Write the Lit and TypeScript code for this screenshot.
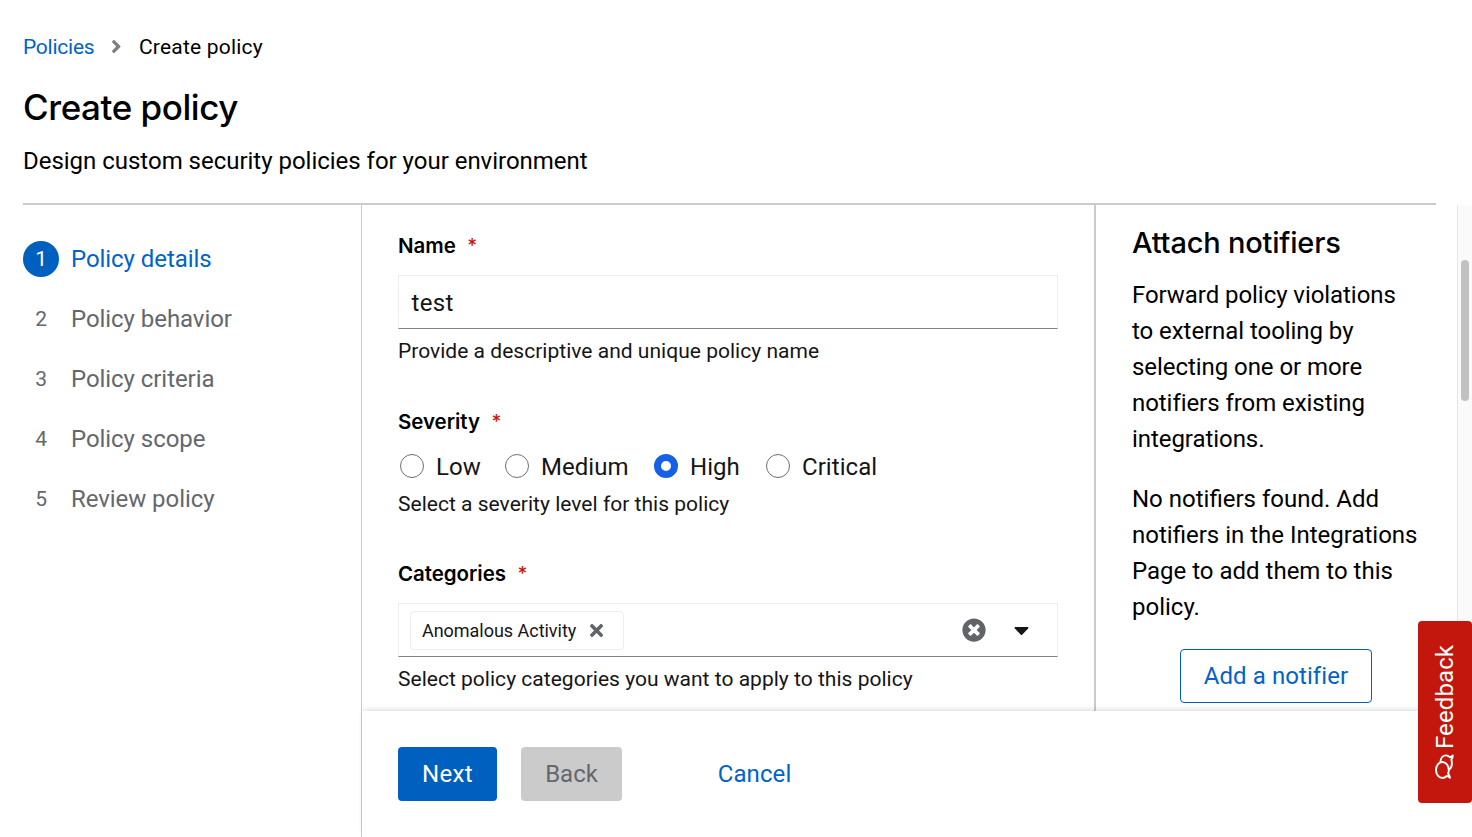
import { LitElement, html, css, svg } from "lit";
import { customElement, state } from "lit/decorators.js";
import { classMap } from "lit/directives/class-map.js";

const ANGLE_RIGHT =
  "M224.3 273l-136 136c-9.4 9.4-24.6 9.4-33.9 0l-22.6-22.6c-9.4-9.4-9.4-24.6 0-33.9l96.4-96.4-96.4-96.4c-9.4-9.4-9.4-24.6 0-33.9L54.3 103c9.4-9.4 24.6-9.4 33.9 0l136 136c9.5 9.4 9.5 24.6.1 34z";
const TIMES =
  "M242.72 256l100.07-100.07c12.28-12.28 12.28-32.19 0-44.48l-22.24-22.24c-12.28-12.28-32.19-12.28-44.48 0L176 189.28 75.93 89.21c-12.28-12.28-32.19-12.28-44.48 0L9.21 111.45c-12.28 12.28-12.28 32.19 0 44.48L109.28 256 9.21 356.07c-12.28 12.28-12.28 32.19 0 44.48l22.24 22.24c12.28 12.28 32.2 12.28 44.48 0L176 322.72l100.07 100.07c12.28 12.28 32.2 12.28 44.48 0l22.24-22.24c12.28-12.28 12.28-32.19 0-44.48L242.72 256z";
const TIMES_CIRCLE =
  "M256 8C119 8 8 119 8 256s111 248 248 248 248-111 248-248S393 8 256 8zm121.6 313.1c4.7 4.7 4.7 12.3 0 17L338 377.6c-4.7 4.7-12.3 4.7-17 0L256 312l-65.1 65.6c-4.7 4.7-12.3 4.7-17 0L134.4 338c-4.7-4.7-4.7-12.3 0-17l65.6-65-65.6-65.1c-4.7-4.7-4.7-12.3 0-17l39.6-39.6c4.7-4.7 12.3-4.7 17 0l65 65.7 65.1-65.6c4.7-4.7 12.3-4.7 17 0l39.6 39.6c4.7 4.7 4.7 12.3 0 17L312 256l65.6 65.1z";
const CARET_DOWN =
  "M31.3 192h257.3c17.8 0 26.7 21.5 14.1 34.1L174.1 354.8c-7.8 7.8-20.5 7.8-28.3 0L17.2 226.1C4.6 213.5 13.5 192 31.3 192z";

const icon = (path: string, width: number, size: number) => html`
  <svg
    width=${(width / 512) * size}
    height=${size}
    viewBox="0 0 ${width} 512"
    fill="currentColor"
    aria-hidden="true"
  >
    ${svg`<path d=${path}></path>`}
  </svg>
`;

@customElement("policy-header")
export class PolicyHeader extends LitElement {
  static styles = css`
    :host {
      display: block;
      margin: 0 36px 0 23px;
      padding: 31px 0 24px;
      border-bottom: 2px solid #cbcbcb;
    }
    .crumbs {
      display: flex;
      align-items: center;
      font-size: 21px;
      line-height: 32px;
    }
    .link {
      color: #0063c8;
      width: 71px;
      text-decoration: none;
      letter-spacing: -0.25px;
    }
    .sep {
      display: flex;
      width: 45px;
      justify-content: center;
      padding-bottom: 1px;
      color: #7c7f83;
    }
    .current {
      letter-spacing: 0.2px;
    }
    h1 {
      margin: 21px 0 12px;
      font: 550 35px/47px Inter, sans-serif;
      letter-spacing: -0.45px;
    }
    p {
      margin: 0;
      letter-spacing: -0.02px;
    }
    svg {
      display: block;
    }
  `;
  render() {
    return html`
      <nav class="crumbs">
        <a class="link" href="#">Policies</a>
        <span class="sep">${icon(ANGLE_RIGHT, 256, 21)}</span>
        <span class="current">Create policy</span>
      </nav>
      <h1>Create policy</h1>
      <p>Design custom security policies for your environment</p>
    `;
  }
}

@customElement("wizard-steps")
export class WizardSteps extends LitElement {
  static styles = css`
    :host {
      display: block;
      flex: none;
      width: 361px;
    }
    ol {
      margin: 0;
      padding: 36px 0 0 23px;
      list-style: none;
      display: flex;
      flex-direction: column;
      gap: 24px;
    }
    li {
      display: flex;
      gap: 12px;
      color: #64686c;
      letter-spacing: -0.06px;
    }
    .num {
      width: 36px;
      height: 36px;
      border-radius: 50%;
      text-align: center;
      font-size: 21px;
    }
    .current {
      color: #0063c8;
    }
    .current .num {
      background: #0060c0;
      color: #fff;
    }
  `;
  render() {
    const steps = ["Policy details", "Policy behavior", "Policy criteria", "Policy scope", "Review policy"];
    return html`<ol>
      ${steps.map(
        (s, i) => html`<li class=${classMap({ current: i === 0 })}>
          <span class="num">${i + 1}</span><span>${s}</span>
        </li>`
      )}
    </ol>`;
  }
}

@customElement("policy-form")
export class PolicyForm extends LitElement {
  static styles = css`
    :host {
      display: block;
      flex: none;
      box-sizing: border-box;
      width: 734px;
      padding: 25px 36px 0;
      border-right: 2px solid #cbcbcb;
      color: #151515;
    }
    .label {
      display: flex;
      gap: 12px;
      color: #000;
      font: 600 20.5px/32px Inter, sans-serif;
      letter-spacing: -0.05px;
    }
    .req {
      color: #c9190b;
      font-size: 19px;
      font-weight: 500;
      margin-left: -0.5px;
    }
    .help {
      font-size: 21px;
      line-height: 32px;
      letter-spacing: 0.02px;
    }
    .control {
      display: flex;
      align-items: center;
      box-sizing: border-box;
      height: 54px;
      margin: 13px 0 6px;
      border: 1px solid #ededed;
      border-bottom-color: #808387;
    }
    .text {
      padding: 2px 0 0 12.5px;
      letter-spacing: 0.35px;
    }
    .sev {
      margin-top: 39px;
    }
    .radios {
      display: grid;
      grid-template-columns: 105px 149px 112px auto;
      margin: 10px 0 4px 2px;
    }
    .radio {
      display: flex;
      align-items: center;
      gap: 12px;
      letter-spacing: 0.05px;
    }
    .name {
      padding-top: 1px;
      margin-bottom: -1px;
    }
    .dot {
      flex: none;
      box-sizing: border-box;
      width: 24px;
      height: 24px;
      border: 1px solid #6b6f7a;
      border-radius: 50%;
    }
    .on {
      border: 7px solid #1560e6;
    }
    .cat {
      margin-top: 38px;
    }
    .chip {
      display: flex;
      align-items: center;
      gap: 14px;
      box-sizing: border-box;
      width: 214px;
      height: 39px;
      margin-left: 11px;
      padding-left: 11px;
      border: 1px solid #ededed;
      border-radius: 4px;
      font-size: 18px;
      letter-spacing: -0.03px;
    }
    .chip-text {
      padding-top: 1px;
      margin-bottom: -1px;
    }
    .x {
      display: flex;
      color: #606469;
    }
    .clear {
      display: flex;
      margin-left: auto;
      color: #606469;
    }
    .caret {
      display: flex;
      margin: 0 28px 0 28px;
    }
    svg {
      display: block;
    }
  `;

  @state() private severity = "High";

  private label(text: string, cls = "") {
    return html`<div class="label ${cls}"><span>${text}</span><span class="req">*</span></div>`;
  }

  render() {
    return html`
      ${this.label("Name")}
      <div class="control"><span class="text">test</span></div>
      <div class="help">Provide a descriptive and unique policy name</div>

      ${this.label("Severity", "sev")}
      <div class="radios">
        ${["Low", "Medium", "High", "Critical"].map(
          (s) => html`<label class="radio" @click=${() => (this.severity = s)}>
            <span class=${classMap({ dot: true, on: s === this.severity })}></span><span class="name">${s}</span>
          </label>`
        )}
      </div>
      <div class="help">Select a severity level for this policy</div>

      ${this.label("Categories", "cat")}
      <div class="control">
        <span class="chip"
          ><span class="chip-text">Anomalous Activity</span><span class="x">${icon(TIMES, 352, 19)}</span></span
        >
        <span class="clear">${icon(TIMES_CIRCLE, 512, 24)}</span>
        <span class="caret">${icon(CARET_DOWN, 320, 24)}</span>
      </div>
      <div class="help">Select policy categories you want to apply to this policy</div>
    `;
  }
}

@customElement("notifier-panel")
export class NotifierPanel extends LitElement {
  static styles = css`
    :host {
      display: block;
      flex: none;
      width: 288px;
      padding: 18px 36px 0;
    }
    h2 {
      margin: 0 0 15px;
      font: 550 29px/39px Inter, sans-serif;
      letter-spacing: -0.2px;
    }
    p {
      margin: 0 -6px 24px 0;
    }
    .intro {
      letter-spacing: -0.06px;
    }
    .button {
      display: block;
      box-sizing: border-box;
      width: 192px;
      height: 54px;
      margin: 0 auto;
      padding: 0;
      border: 1px solid #0060c0;
      border-radius: 4px;
      background: #fff;
      color: #0063c8;
      font: 24px/52px Roboto, sans-serif;
      letter-spacing: 0.08px;
    }
  `;
  render() {
    return html`
      <h2>Attach notifiers</h2>
      <p class="intro">
        Forward policy violations<br />to external tooling by<br />selecting one or more<br />notifiers
        from existing<br />integrations.
      </p>
      <p>No notifiers found. Add<br />notifiers in the Integrations<br />Page to add them to this<br />policy.</p>
      <button class="button">Add a notifier</button>
    `;
  }
}

@customElement("feedback-tab")
export class FeedbackTab extends LitElement {
  static styles = css`
    :host {
      position: absolute;
      z-index: 3;
      right: 0;
      top: 621px;
      box-sizing: border-box;
      display: flex;
      align-items: center;
      gap: 5px;
      width: 54px;
      height: 182px;
      padding-top: 24px;
      border-radius: 4px;
      background: #c3170d;
      color: #fff;
      writing-mode: vertical-rl;
      transform: rotate(180deg);
      font: 450 24px/54px Roboto, sans-serif;
      letter-spacing: 0.1px;
    }
    svg {
      display: block;
      transform: rotate(90deg);
      margin: 3px 0;
    }
  `;
  render() {
    return html`
      <svg width="25" height="19" viewBox="0 0 25 19" fill="none" stroke="#fff" stroke-width="1.9" stroke-linejoin="round">
        <path
          d="M1.2 15C2.6 13.8 3 12.8 3 11.8C1.6 10.4 1 9 1 7.4C1 3.8 4.6 1 9 1C13.4 1 17 3.8 17 7.4C17 11 13.4 13.8 9 13.8C7.5 13.8 6.4 13.5 5.4 13.1C4 14.3 2.6 15 1.2 15Z"
        />
        <path
          d="M16.8 5.4C21 5.6 23.6 8 23.6 11C23.6 12.6 22.8 13.8 21.8 14.8C22 16 22.6 17 23.6 17.8C21.8 17.8 20.4 17 19.4 16.4C14.5 17.6 10.6 16 9.2 13.8"
        />
      </svg>
      <span>Feedback</span>
    `;
  }
}

@customElement("app-root")
export class AppRoot extends LitElement {
  static styles = css`
    :host {
      position: relative;
      display: flex;
      flex-direction: column;
      height: 837px;
      overflow: hidden;
      background: #fff;
      color: #000;
      font: 24px/36px Roboto, sans-serif;
    }
    .main {
      display: flex;
      flex: 1;
      min-height: 0;
    }
    .content {
      display: flex;
      flex: 1;
      flex-direction: column;
      border-left: 1px solid #cbcbcb;
    }
    .body {
      display: flex;
      flex: 1;
      min-height: 0;
      overflow: hidden;
    }
    .track {
      flex: none;
      box-sizing: border-box;
      width: 15px;
      margin-left: auto;
      padding: 55px 3px 0;
      border-left: 1px solid #e6e6e6;
      background: #fafafa;
    }
    .thumb {
      width: 8px;
      height: 141px;
      border-radius: 4px;
      background: #c1c1c1;
    }
    .footer {
      position: relative;
      z-index: 1;
      display: flex;
      flex: none;
      box-sizing: border-box;
      height: 126px;
      padding: 36px 36px 0;
      background: #fff;
      box-shadow: 0 -3px 6px -1.5px rgba(3, 3, 3, 0.16);
    }
    .btn {
      height: 54px;
      padding: 0;
      border: 0;
      border-radius: 4px;
      font: 24px/54px Roboto, sans-serif;
    }
    .next {
      width: 99px;
      background: #0060c0;
      color: #fff;
      letter-spacing: 0.3px;
    }
    .back {
      width: 101px;
      margin-left: 24px;
      background: #cbcbcb;
      color: #64686c;
    }
    .cancel {
      width: 121px;
      margin-left: 72px;
      background: none;
      color: #0063c8;
      letter-spacing: 0.1px;
    }
  `;
  render() {
    return html`
      <policy-header></policy-header>
      <div class="main">
        <wizard-steps></wizard-steps>
        <div class="content">
          <div class="body">
            <policy-form></policy-form>
            <notifier-panel></notifier-panel>
            <div class="track"><div class="thumb"></div></div>
          </div>
          <div class="footer">
            <button class="btn next">Next</button>
            <button class="btn back">Back</button>
            <button class="btn cancel">Cancel</button>
          </div>
        </div>
      </div>
      <feedback-tab></feedback-tab>
    `;
  }
}
